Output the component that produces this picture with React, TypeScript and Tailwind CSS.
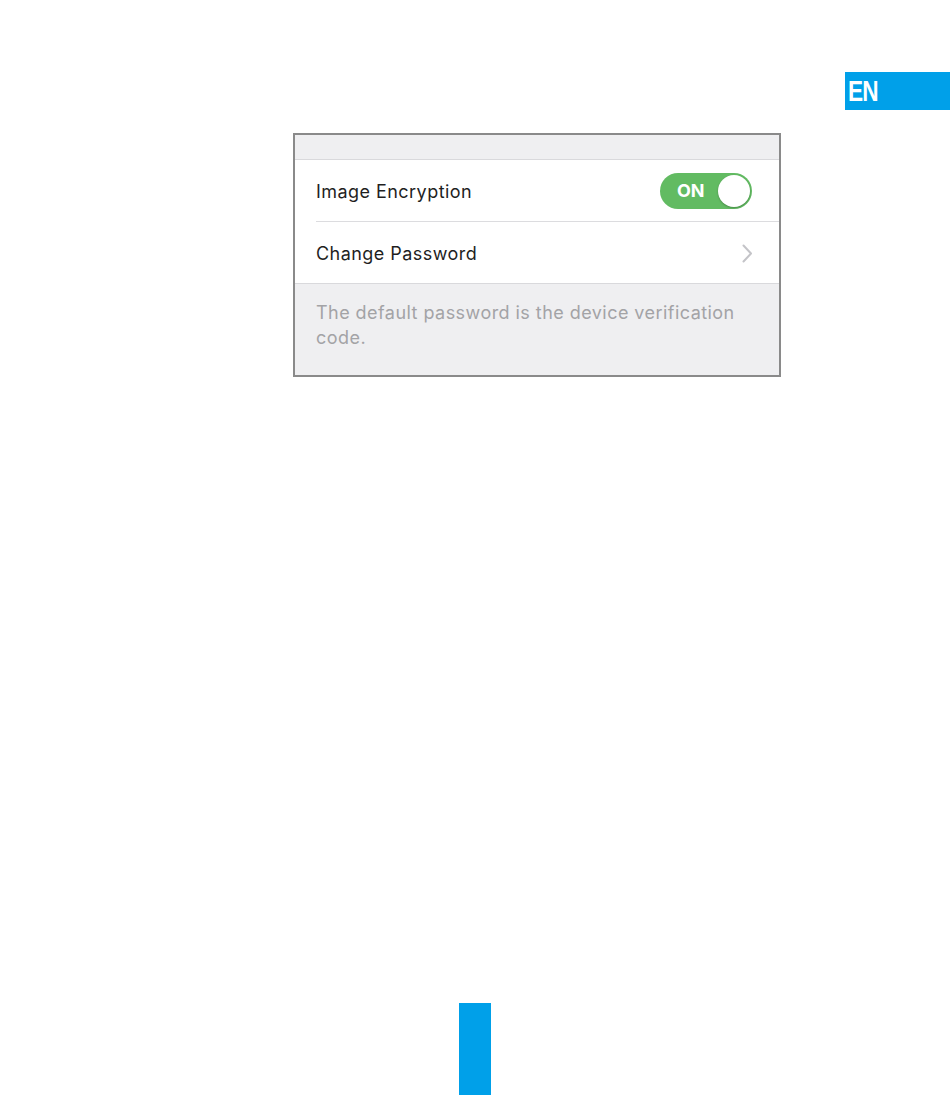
export default function App() {
  return (
    <div className="w-[950px] h-[1095px] bg-white flex flex-col overflow-hidden font-['Inter','Liberation_Sans',sans-serif]">
      {/* Language tab */}
      <div className="flex justify-end mt-[72px]">
        <div className="w-[105px] h-[38px] bg-[#00a0e9] flex items-center pl-[3px]">
          <span className="text-white text-[29px] font-bold leading-none tracking-[-1px] scale-x-[0.78] origin-left font-['Liberation_Sans_Narrow','Liberation_Sans',sans-serif]">
            EN
          </span>
        </div>
      </div>

      {/* Settings panel */}
      <div className="ml-[293px] mt-[23px] w-[488px] border-2 border-[#8a8a8a] bg-[#efeff1] tracking-[0.45px]">
        <div className="h-[25px] border-b border-[#d9d9dc]" />
        <div className="bg-white pl-[21px]">
          <div className="h-[62px] flex items-center justify-between pr-[27px] border-b border-[#dcdcdf]">
            <span className="text-[18px] text-[#1f1f1f] mt-[2px]">Image Encryption</span>
            <div className="w-[92px] h-[36px] rounded-full bg-[#62bb62] flex items-center justify-between pl-[17px] pr-[2px] tracking-normal">
              <span className="text-white text-[18px] font-bold leading-none">ON</span>
              <div className="w-[32px] h-[32px] rounded-full bg-white shadow-[0_1px_2px_rgba(0,0,0,0.25)]" />
            </div>
          </div>
          <div className="h-[61px] flex items-center justify-between pr-[26px]">
            <span className="text-[18px] text-[#1f1f1f] mt-[2px]">Change Password</span>
            <svg width="11" height="19" viewBox="0 0 11 19" fill="none" className="mt-[1px]">
              <path d="M1.5 1.5 L9 9.5 L1.5 17.5" stroke="#c4c4c8" strokeWidth="2" strokeLinecap="round" strokeLinejoin="round" />
            </svg>
          </div>
        </div>
        <div className="border-t border-[#d9d9dc] h-[92px] pl-[21px] pr-[40px] pt-[16px]">
          <p className="text-[18px] leading-[25px] text-[#a3a3a6]">
            The default password is the device verification code.
          </p>
        </div>
      </div>

      {/* Bottom page marker */}
      <div className="mt-auto ml-[459px] w-[32px] h-[92px] bg-[#00a0e9]" />
    </div>
  );
}
